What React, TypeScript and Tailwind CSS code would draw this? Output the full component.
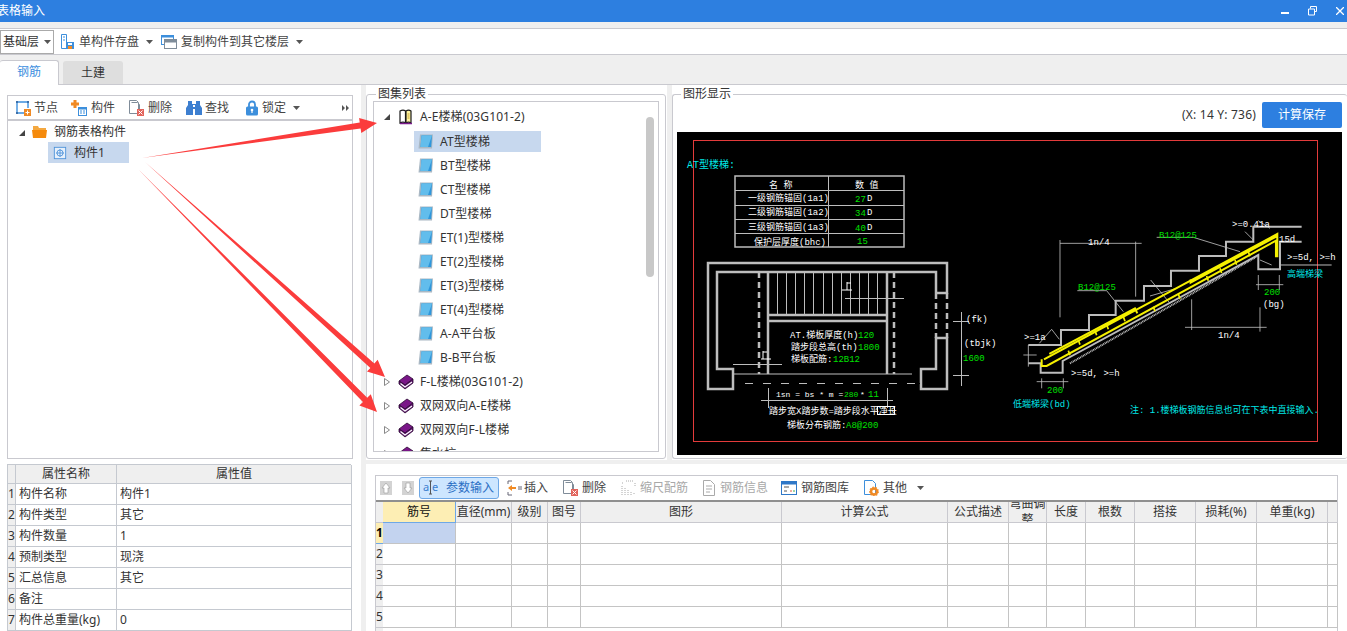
import type { ReactNode } from "react";

const cadFont = "'Liberation Mono','Noto Sans CJK SC',monospace";

function Caret({ className = "" }: { className?: string }) {
  return (
    <svg width="7" height="4" viewBox="0 0 7 4" className={className}>
      <path d="M0 0h7L3.5 4z" fill="#555" />
    </svg>
  );
}

function Icon({ size = 16, children }: { size?: number; children: ReactNode }) {
  return (
    <svg width={size} height={size} viewBox="0 0 16 16" className="shrink-0">
      {children}
    </svg>
  );
}

const DiskIcon = () => (
  <Icon>
    <path d="M1.5.5h5v14h-5zM3 3h2M3 6h2" fill="#fff" stroke="#3d8fdc" />
    <rect x="6" y="8" width="8" height="7" fill="#3d8fdc" />
    <rect x="8" y="9" width="4" height="2" fill="#fff" />
    <rect x="8" y="12" width="4" height="3" fill="#f08a24" />
  </Icon>
);
const CopyIcon = () => (
  <Icon>
    <rect x="0.5" y="1.5" width="12" height="9" fill="#fff" stroke="#3d8fdc" />
    <rect x="0.5" y="1.5" width="12" height="2" fill="#3d8fdc" />
    <rect x="3.5" y="5.5" width="12" height="9" fill="#fff" stroke="#7f8c99" />
    <rect x="3.5" y="5.5" width="12" height="3" fill="#7f8c99" />
  </Icon>
);
const NodeIcon = () => (
  <Icon>
    <path d="M3 2h9M2 3v9M3 13h6M13 3v5" stroke="#3d8fdc" strokeWidth="1.4" fill="none" />
    <rect x="1" y="1" width="2" height="2" fill="#3d6fa8" />
    <rect x="12" y="1" width="2" height="2" fill="#3d6fa8" />
    <rect x="1" y="12" width="2" height="2" fill="#3d6fa8" />
    <rect x="9" y="9" width="7" height="7" fill="#f08a24" />
    <path d="M12.5 10.5v4M10.5 12.5h4" stroke="#fff" />
  </Icon>
);
const PartIcon = () => (
  <Icon>
    <path d="M2.5 0h3v2.5H8v3H5.5V8h-3V5.5H0v-3h2.5z" fill="#f08a24" />
    <rect x="7.5" y="7.5" width="8" height="8" fill="#fff" stroke="#3d8fdc" />
    <rect x="7.5" y="7.5" width="8" height="2" fill="#3d8fdc" />
    <path d="M9 11h2M12 11h2M9 13h2M12 13h2" stroke="#3d8fdc" />
  </Icon>
);
const DeleteIcon = () => (
  <Icon>
    <path d="M1.5.5h7l2 2v11h-9z" fill="#fff" stroke="#7f8c99" />
    <path d="M3.5 2.5h6l2 2v6" fill="none" stroke="#7f8c99" />
    <rect x="9" y="9" width="7" height="7" fill="#e2645c" />
    <path d="M10.5 10.5l4 4M14.5 10.5l-4 4" stroke="#fff" />
  </Icon>
);
const BinocularsIcon = () => (
  <Icon>
    <path d="M2 1h4v3h4V1h4v4l2 3v7H9V9H7v6H0V8l2-3z" fill="#3d7fd0" />
    <rect x="7" y="5" width="2" height="2" fill="#fff" />
  </Icon>
);
const LockIcon = () => (
  <Icon>
    <path d="M5 7V4.5a3 3 0 0 1 6 0V7" fill="none" stroke="#3d8fdc" strokeWidth="1.8" />
    <rect x="2" y="6.5" width="12" height="9" rx="1.5" fill="#3d8fdc" />
    <circle cx="8" cy="10" r="1.3" fill="#fff" />
    <rect x="7.4" y="10" width="1.2" height="3" fill="#fff" />
  </Icon>
);
const FolderIcon = () => (
  <Icon>
    <path d="M1 2h5l1 2h7v2H1z" fill="#f4a840" />
    <path d="M0 6h15l-1 8H1z" fill="#f58a0c" />
  </Icon>
);
const PartTreeIcon = () => (
  <Icon size={14}>
    <rect x="1.5" y="1.5" width="13" height="13" fill="#e6f0fb" stroke="#4a90d9" />
    <circle cx="8" cy="8" r="3.5" fill="none" stroke="#4a90d9" />
    <path d="M8 3.5v9M3.5 8h9" stroke="#4a90d9" />
  </Icon>
);
const OpenBookIcon = () => (
  <Icon>
    <path d="M2 2c2-1 4-1 5.500 0v12C6 13 4 13 2 14z" fill="#fff" stroke="#1a1a1a" strokeWidth="1.2" />
    <path d="M8 2c1.500-1 3.500-1 5 0v12c-1.500-1-3.500-1-5 0z" fill="#fdf3a0" stroke="#1a1a1a" strokeWidth="1.2" />
    <path d="M2 14.500h12" stroke="#7a1a8a" strokeWidth="1.500" />
    <path d="M9.500 5h2M9.500 7h2M9.500 9h2" stroke="#c8a030" />
  </Icon>
);
const PageIcon = () => (
  <Icon>
    <path d="M2 0.500h13l-1 14H0.500z" fill="#a9b8c4" />
    <path d="M3.500 1.500h10.500l-.8 11.500H2.500z" fill="#2f97dc" />
    <path d="M3.500 1.500h10.500l-4 11.500H2.500z" fill="#62bdec" />
  </Icon>
);
const ClosedBookIcon = () => (
  <Icon>
    <path d="M1 7l8-6 6 4-8 6z" fill="#7a1688" stroke="#2c0a33" strokeWidth=".8" />
    <path d="M1 7v3l6 5 8-6V5l-8 6z" fill="#5c0e6c" stroke="#2c0a33" strokeWidth=".8" />
    <path d="M2.500 9.500l4.500 3.500 7-5" fill="none" stroke="#fff" strokeWidth="1.200" />
  </Icon>
);
const ParamIcon = () => (
  <svg width="15" height="16" viewBox="0 0 15 16" className="shrink-0">
    <text x="0" y="11" fontSize="11" fill="#3a7fd0" fontFamily="'Noto Sans',sans-serif">a</text>
    <text x="9" y="11" fontSize="11" fill="#3a7fd0" fontFamily="'Noto Sans',sans-serif">e</text>
    <path d="M6 1h3M6 14h3M7.500 1v13" stroke="#555" fill="none" />
  </svg>
);
const InsertIcon = () => (
  <Icon>
    <path d="M1 1h4M1 1v3M1 12v3h4M11 7h4M11 9h4" stroke="#667" fill="none" />
    <path d="M1 8l4-3v2h4v2H5v2z" fill="#f08a24" />
  </Icon>
);
const ScaleIcon = () => (
  <Icon>
    <path d="M1 3h1M5 1h8M1 6v9M4 8v7M7 10v5M10 12v3M13 13v2M14 3v3" stroke="#aaa" fill="none" strokeDasharray="1 1" />
  </Icon>
);
const InfoIcon = () => (
  <Icon>
    <path d="M2.500.5h7l4 4v11h-11z" fill="#fff" stroke="#aaa" />
    <path d="M5 6h6M5 9h6M5 12h4" stroke="#aaa" />
  </Icon>
);
const LibraryIcon = () => (
  <Icon>
    <rect x="0.500" y="1.500" width="15" height="13" fill="#fff" stroke="#2f78c8" />
    <rect x="0.500" y="1.500" width="15" height="3" fill="#2f78c8" />
    <path d="M3 7h5M3 11h3" stroke="#555" />
    <path d="M9 11h2" stroke="#e0553f" />
    <path d="M12 11h2" stroke="#3db04a" />
  </Icon>
);
const OtherIcon = () => (
  <Icon>
    <path d="M1.500.5h8l3 3v11h-11z" fill="#fff" stroke="#3d8fdc" />
    <circle cx="11" cy="11.500" r="3" fill="none" stroke="#f08a24" strokeWidth="2.500" />
    <circle cx="11" cy="11.500" r="4.300" fill="none" stroke="#f08a24" strokeWidth="1.200" strokeDasharray="1.500 1.500" />
  </Icon>
);

function ToolButton({
  icon,
  label,
  gap,
  width,
  caret,
  muted,
}: {
  icon: ReactNode;
  label: string;
  gap: string;
  width: string;
  caret?: string;
  muted?: boolean;
}) {
  return (
    <div className={`flex items-center ${gap} ${width} ${muted ? "text-[#a8a8a8]" : "text-[#444]"}`}>
      {icon}
      <span className="whitespace-nowrap">{label}</span>
      {caret && <Caret className={caret} />}
    </div>
  );
}

function TreeItem({ label, selected }: { label: string; selected?: boolean }) {
  return (
    <div className={`flex h-[21px] w-[127px] items-center gap-[6px] pl-[4px] mb-[3px] ml-[40px] ${selected ? "bg-[#c7d8ee]" : ""}`}>
      <PageIcon />
      <span className="whitespace-nowrap tracking-[.1px]">{label}</span>
    </div>
  );
}

function BookRow({ label, open }: { label: string; open?: boolean }) {
  return (
    <div className="flex h-[24px] items-center pl-[9px]">
      <svg width="8" height="8" viewBox="0 0 8 8" className="mr-[7px] shrink-0">
        {open ? <path d="M7 1v6H1z" fill="#444" /> : <path d="M1.500.5l5 3.500-5 3.500z" fill="#fff" stroke="#888" />}
      </svg>
      {open ? <OpenBookIcon /> : <ClosedBookIcon />}
      <span className="ml-[6px] whitespace-nowrap tracking-[.1px]">{label}</span>
    </div>
  );
}

const gridColumns = [
  { title: "筋号", cell: "w-[73px]" },
  { title: "直径(mm)", cell: "w-[56px]" },
  { title: "级别", cell: "w-[36px]" },
  { title: "图号", cell: "w-[33px]" },
  { title: "图形", cell: "w-[201px]" },
  { title: "计算公式", cell: "w-[166px]" },
  { title: "公式描述", cell: "w-[61px]" },
  { title: "弯曲调整", cell: "w-[38px]" },
  { title: "长度", cell: "w-[39px]" },
  { title: "根数", cell: "w-[49px]" },
  { title: "搭接", cell: "w-[61px]" },
  { title: "损耗(%)", cell: "w-[61px]" },
  { title: "单重(kg)", cell: "w-[71px]" },
  { title: "", cell: "w-[10px]" },
];

const properties = [
  ["构件名称", "构件1"],
  ["构件类型", "其它"],
  ["构件数量", "1"],
  ["预制类型", "现浇"],
  ["汇总信息", "其它"],
  ["备注", ""],
  ["构件总重量(kg)", "0"],
];

function CadText({ x, y, fill = "#fff", size = 9, children }: { x: number; y: number; fill?: string; size?: number; children: ReactNode }) {
  return (
    <text x={x} y={y} fill={fill} fontSize={size} fontFamily={cadFont}>
      {children}
    </text>
  );
}

function StairDrawing() {
  const treads = [777, 786, 795, 804, 813, 823, 832, 841, 850, 859, 868, 877];
  const tableRows = [
    ["一级钢筋锚固(1a1)", "27", 201, 748],
    ["二级钢筋锚固(1a2)", "34", 215, 748],
    ["三级钢筋锚固(1a3)", "40", 230, 748],
  ] as const;
  return (
    <svg viewBox="677 132 665 323" width="665" height="323" className="block">
      <rect x="677" y="132" width="665" height="323" fill="#000" />
      <rect x="693.500" y="140.500" width="624" height="301" fill="none" stroke="#e33b3b" />
      <CadText x={687} y={168} fill="#00e8e8" size={10}>AT型楼梯:</CadText>

      <g stroke="#bdbdbd" fill="none">
        <rect x="735" y="176" width="169" height="71" strokeWidth="1.500" />
        <path d="M735 190.500h169M735 205.500h169M735 219.500h169M735 233.500h169M828.500 176v71" />
      </g>
      <CadText x={769} y={188}>名  称</CadText>
      <CadText x={855} y={188}>数  值</CadText>
      {tableRows.map(([name, value, y, x]) => (
        <g key={name}>
          <CadText x={x} y={y}>{name}</CadText>
          <CadText x={855} y={y + 1} fill="#00e000">{value}</CadText>
          <CadText x={867} y={y}>D</CadText>
        </g>
      ))}
      <CadText x={754} y={245}>保护层厚度(bhc)</CadText>
      <CadText x={857} y={244} fill="#00e000">15</CadText>

      <g stroke="#bdbdbd" fill="none" strokeWidth="2.500">
        <path d="M936 293v-21H717v97h16v20h-25V263h239v30h-11" />
        <path d="M947 338v51h-26v-20h15v-31z" />
        <path d="M768 272v102M887 272v102M768 315h119M768 321h119" />
        <path d="M759 272v102M894 272v102M936 293v45M947 293v45" strokeDasharray="6 4" />
      </g>
      <g stroke="#bdbdbd" fill="none">
        {treads.map((x) => (
          <path key={x} d={`M${x}.5 272v43`} />
        ))}
        <path d="M733 374h179M735 383.500h185" strokeWidth="1.200" />
        <path d="M735 383.500h185" stroke="#000" strokeDasharray="10 8" />
        <path d="M845 298.500h59M733 364.500h49M768.500 388v20M887.500 388v20M761 400.500h132M961.500 312v74M953 321.500h16M953 375.500h16" />
      </g>
      <path d="M842 290h10M847 282v8M847 283h4M761 359h10M763 351v8M763 352h4" stroke="#fff" fill="none" />

      <CadText x={790} y={338}>AT.梯板厚度(h)</CadText>
      <CadText x={858} y={338} fill="#00e000">120</CadText>
      <CadText x={791} y={350}>踏步段总高(th)</CadText>
      <CadText x={858} y={350} fill="#00e000">1800</CadText>
      <CadText x={791} y={362}>梯板配筋:</CadText>
      <CadText x={833} y={362} fill="#00e000">12B12</CadText>
      <CadText x={776} y={397} size={8}>1sn = bs * m =</CadText>
      <CadText x={844} y={397} size={8} fill="#00e000">280</CadText>
      <CadText x={860} y={397} size={8}>*</CadText>
      <CadText x={868} y={397} fill="#00e000">11</CadText>
      <CadText x={769} y={414}>踏步宽X踏步数=踏步段水平净长</CadText>
      <rect x="877.500" y="406.500" width="17" height="8" fill="none" stroke="#fff" />
      <CadText x={787} y={428}>梯板分布钢筋:</CadText>
      <CadText x={846} y={428} fill="#00e000">A8@200</CadText>
      <CadText x={966} y={322}>(fk)</CadText>
      <CadText x={964} y={346}>(tbjk)</CadText>
      <CadText x={963} y={361} fill="#00e000">1600</CadText>

      <g transform="translate(1000 200) scale(0.3333)" fill="none">
        <path
          d="M85 435H183V390H267V345H347V302H432V258H513V212H597V168H678V125H760V80H905M85 490H122V518H188V483L775 165V208H840V125H905"
          stroke="#bdbdbd"
          strokeWidth="6"
        />
        <path d="M840 195H995" stroke="#bdbdbd" strokeWidth="3" />
        <path
          d="M180 130H425M180 120V352M407 125V290M555 382H800M575 298V390M780 322V395M110 545H205M125 535V565M190 535V565M768 254H850M775 225V270M838 225V270M470 112H580L720 155M232 272H320L370 335M70 465H110M85 435V500"
          stroke="#bdbdbd"
          strokeWidth="2.500"
        />
        <path d="M450 288L530 265M452 240L510 310M118 430L155 388L178 418M735 95L760 120M775 62L810 85M780 180L815 195" stroke="#bdbdbd" strokeWidth="2.500" />
        <path
          d="M125 478V498H140L828 122V172M132 478L832 102V172M148 462L405 325L412 340M572 238V248L832 108"
          stroke="#f5f000"
          strokeWidth="6"
        />
        <path d="M235 420l5 14M285 392l5 14M320 374l5 14M370 350l5 14M205 452l5 14M460 320l5 14M535 282l5 14M620 228l5 14M660 205l5 14M705 180l5 14M745 155l5 14" stroke="#f5f000" strokeWidth="5" />
        <path d="M210 490L770 170" stroke="#bdbdbd" strokeWidth="6" strokeDasharray="3 2" />
      </g>
      <CadText x={1159} y={238} fill="#00e000" size={9}>B12@125</CadText>
      <CadText x={1078} y={290} fill="#00e000" size={9}>B12@125</CadText>
      <CadText x={1088} y={245}>1n/4</CadText>
      <CadText x={1218} y={338}>1n/4</CadText>
      <CadText x={1232} y={227}>{">=0.41a"}</CadText>
      <CadText x={1279} y={242}>15d</CadText>
      <CadText x={1287} y={260}>{">=5d, >=h"}</CadText>
      <CadText x={1287} y={277} fill="#00e8e8">高端梯梁</CadText>
      <CadText x={1264} y={295} fill="#00e000">200</CadText>
      <CadText x={1263} y={307}>(bg)</CadText>
      <CadText x={1024} y={340}>{">=1a"}</CadText>
      <CadText x={1071} y={376}>{">=5d, >=h"}</CadText>
      <CadText x={1047} y={393} fill="#00e000">200</CadText>
      <CadText x={1013} y={407} fill="#00e8e8">低端梯梁(bd)</CadText>
      <CadText x={1130} y={413} fill="#00e8e8">注: 1.楼梯板钢筋信息也可在下表中直接输入.</CadText>
    </svg>
  );
}

function arrowPoints(x1: number, y1: number, x2: number, y2: number, shaft: number, head: number, len: number) {
  const dx = x2 - x1;
  const dy = y2 - y1;
  const d = Math.hypot(dx, dy);
  const ux = dx / d;
  const uy = dy / d;
  const bx = x2 - ux * len;
  const by = y2 - uy * len;
  const nx = -uy;
  const ny = ux;
  return [
    [x1, y1],
    [bx + nx * shaft, by + ny * shaft],
    [bx + nx * head, by + ny * head],
    [x2, y2],
    [bx - nx * head, by - ny * head],
    [bx - nx * shaft, by - ny * shaft],
  ]
    .map((p) => p.join(","))
    .join(" ");
}

export default function App() {
  return (
    <div className="relative flex h-[631px] w-[1347px] flex-col overflow-hidden bg-white text-[12px] leading-[16px] text-[#333] [font-family:'Noto_Sans','Noto_Sans_CJK_SC',sans-serif]">
      <div className="flex h-[22px] items-center justify-between bg-[#2d7fe0] pr-[3px] text-white">
        <span className="ml-[-3px]">表格输入</span>
        <div className="flex items-center gap-[19px]">
          <div className="mt-[3px] h-[2px] w-[8px] bg-white" />
          <svg width="9" height="10" viewBox="0 0 9 10">
            <path d="M2.500 2.500v-2h6v5h-2M.5 3h6v6h-6z" fill="none" stroke="#fff" />
          </svg>
          <svg width="8" height="8" viewBox="0 0 8 8">
            <path d="M0 0l8 8M8 0L0 8" stroke="#fff" strokeWidth="1.300" />
          </svg>
        </div>
      </div>

      <div className="h-[6px] bg-[#efefef]" />

      <div className="flex h-[27px] items-center border-y border-[#c9c9cf]">
        <div className="flex h-[24px] w-[54px] items-center border border-[#aaa] pl-[2px]">
          <span>基础层</span>
          <Caret className="ml-[5px]" />
        </div>
        <div className="ml-[6px] flex items-center">
          <ToolButton icon={<DiskIcon />} label="单构件存盘" gap="gap-[3px]" width="w-[101px]" caret="ml-[4px]" />
          <ToolButton icon={<CopyIcon />} label="复制构件到其它楼层" gap="gap-[4px]" width="w-[150px]" caret="ml-[3px]" />
        </div>
      </div>

      <div className="flex h-[30px] items-end gap-[4px] border-b border-[#c9c9cf] bg-[#efefef]">
        <div className="flex h-[25px] w-[59px] items-center justify-center rounded-t-[3px] border-r border-t border-[#c9c9cf] bg-white text-[#3d8fe0] mb-[-1px] pb-[2px]">钢筋</div>
        <div className="flex h-[23px] w-[60px] items-center justify-center rounded-t-[3px] bg-[#dedede]">土建</div>
      </div>

      <div className="flex min-h-0 flex-1">
        <div className="flex w-[361px] shrink-0 flex-col pl-[7px] pt-[10px]">
          <div className="flex h-[364px] w-[346px] flex-col border border-[#c9c9cf]">
            <div className="relative flex h-[25px] items-center border-b-2 border-[#c9c9cf] pl-[7px]">
              <ToolButton icon={<NodeIcon />} label="节点" gap="gap-[3px]" width="w-[56px]" />
              <ToolButton icon={<PartIcon />} label="构件" gap="gap-[4px]" width="w-[57px]" />
              <ToolButton icon={<DeleteIcon />} label="删除" gap="gap-[4px]" width="w-[58px]" />
              <ToolButton icon={<BinocularsIcon />} label="查找" gap="gap-[3px]" width="w-[58px]" />
              <ToolButton icon={<LockIcon />} label="锁定" gap="gap-[2px]" width="w-[80px]" caret="ml-[5px]" />
              <svg width="8" height="6" viewBox="0 0 8 6" className="absolute right-[2px] top-[9px]">
                <path d="M0 0l3 3-3 3zM4 0l3 3-3 3z" fill="#555" />
              </svg>
            </div>
            <div className="flex h-[21px] items-center pl-[10px] pt-[1px]">
              <svg width="8" height="8" viewBox="0 0 8 8" className="mr-[6px] mt-[1px]">
                <path d="M7 1v6H1z" fill="#444" />
              </svg>
              <FolderIcon />
              <span className="ml-[6px]">钢筋表格构件</span>
            </div>
            <div className="ml-[40px] flex h-[21px] w-[81px] items-center gap-[7px] bg-[#c7d8ee] pl-[5px]">
              <PartTreeIcon />
              <span>构件1</span>
            </div>
          </div>

          <div className="mt-[5px] grid w-[344px] grid-cols-[8px_101px_235px] border-l border-t border-[#c5c9d0]">
            <div className="h-[19px] border-b border-r border-[#c5c9d0] bg-[#efefef]" />
            <div className="flex h-[19px] items-center justify-center border-b border-r border-[#c5c9d0] bg-[#efefef]">属性名称</div>
            <div className="flex h-[19px] items-center justify-center border-b border-r border-[#c5c9d0] bg-[#efefef]">属性值</div>
            {properties.map(([name, value], i) => (
              <div key={name} className="contents">
                <div className="flex h-[21px] items-center border-b border-r border-[#c5c9d0] bg-[#efefef]">{i + 1}</div>
                <div className="flex h-[21px] items-center whitespace-nowrap border-b border-r border-[#c5c9d0] pl-[3px]">{name}</div>
                <div className="flex h-[21px] items-center border-b border-r border-[#c5c9d0] pl-[3px]">{value}</div>
              </div>
            ))}
          </div>
        </div>

        <div className="w-[5px] shrink-0 bg-[#efefef]" />

        <div className="flex min-w-0 flex-1 flex-col">
          <div className="flex h-[375px] shrink-0">
            <fieldset className="mt-[2px] h-[372px] w-[300px] rounded-[3px] border border-[#c9c9cf] px-[6px]">
              <legend className="ml-[3px] px-[2px] leading-[14px]">图集列表</legend>
              <div className="relative h-[351px] overflow-hidden border border-[#c9c9cf]">
                <div className="pt-[3px]">
                  <BookRow label="A-E楼梯(03G101-2)" open />
                  <div className="pt-[2px]">
                    {["AT型楼梯", "BT型楼梯", "CT型楼梯", "DT型楼梯", "ET(1)型楼梯", "ET(2)型楼梯", "ET(3)型楼梯", "ET(4)型楼梯", "A-A平台板", "B-B平台板"].map((label, i) => (
                      <TreeItem key={label} label={label} selected={i === 0} />
                    ))}
                  </div>
                  <div className="mt-[-1px]">
                    <BookRow label="F-L楼梯(03G101-2)" />
                    <BookRow label="双网双向A-E楼梯" />
                    <BookRow label="双网双向F-L楼梯" />
                    <BookRow label="集水坑" />
                  </div>
                </div>
                <div className="absolute right-[4px] top-[15px] h-[160px] w-[8px] rounded-[4px] bg-[#c8c8c8]" />
              </div>
            </fieldset>
            <div className="ml-[1px] w-[5px] shrink-0 bg-[#efefef]" />
            <fieldset className="mt-[2px] h-[372px] min-w-0 flex-1 rounded-[3px] border border-r-0 border-[#c9c9cf] pl-[4px]">
              <legend className="ml-[4px] px-[2px] leading-[14px]">图形显示</legend>
              <div className="flex h-[27px] items-center justify-end gap-[6px] pr-[5px]">
                <span className="mt-[1px] tracking-[.2px]">(X: 14 Y: 736)</span>
                <div className="flex h-[26px] w-[80px] items-center justify-center rounded-[2px] bg-[#2d7fe0] text-white">计算保存</div>
              </div>
              <div className="mt-[4px]">
                <StairDrawing />
              </div>
            </fieldset>
          </div>

          <div className="h-[4px] shrink-0 bg-[#efefef]" />

          <div className="flex-1 pl-[9px] pt-[11px]">
            <div className="w-[963px] border-l border-r border-t border-[#c9c9cf]">
              <div className="flex h-[26px] items-center border-b-2 border-[#8f8f8f] pl-[4px]">
                <svg width="12" height="14" viewBox="0 0 12 14" className="shrink-0">
                  <rect width="12" height="14" fill="#d3d3d3" />
                  <path d="M6 2l4 5H8v5H4V7H2z" fill="#fff" stroke="#999" strokeWidth=".6" />
                </svg>
                <svg width="12" height="14" viewBox="0 0 12 14" className="ml-[10px] shrink-0">
                  <rect width="12" height="14" fill="#d3d3d3" />
                  <path d="M6 12l4-5H8V2H4v5H2z" fill="#fff" stroke="#999" strokeWidth=".6" />
                </svg>
                <div className="ml-[5px] flex h-[22px] w-[80px] items-center gap-[8px] rounded-[3px] border border-[#6ea8e6] bg-[#cde6ff] pl-[3px] text-[#2a6fc4]">
                  <ParamIcon />
                  <span>参数输入</span>
                </div>
                <div className="ml-[8px] flex items-center">
                  <ToolButton icon={<InsertIcon />} label="插入" gap="gap-[1px]" width="w-[55px]" />
                  <ToolButton icon={<DeleteIcon />} label="删除" gap="gap-[4px]" width="w-[59px]" />
                  <ToolButton icon={<ScaleIcon />} label="缩尺配筋" gap="gap-[3px]" width="w-[80px]" muted />
                  <ToolButton icon={<InfoIcon />} label="钢筋信息" gap="gap-[3px]" width="w-[80px]" muted />
                  <ToolButton icon={<LibraryIcon />} label="钢筋图库" gap="gap-[4px]" width="w-[82px]" />
                  <ToolButton icon={<OtherIcon />} label="其他" gap="gap-[4px]" width="w-[70px]" caret="ml-[6px]" />
                </div>
              </div>

              <div className="flex h-[21px]">
                <div className="w-[7px] shrink-0 border-b border-[#c9c9cf] bg-[#efefef]" />
                {gridColumns.map((col, i) => (
                  <div
                    key={col.title + i}
                    className={`flex shrink-0 items-center justify-center overflow-hidden border-b border-r text-center leading-[16px] ${col.cell} ${i === 0 ? "border-b-[#6ea8e6] border-r-[#6ea8e6] bg-[#fdeeb4] text-[#111]" : "border-[#c9c9cf] bg-[#efefef]"}`}
                  >
                    {col.title}
                  </div>
                ))}
              </div>
              {[1, 2, 3, 4, 5].map((row) => (
                <div key={row} className="flex h-[21px]">
                  <div className={`w-[7px] shrink-0 overflow-visible border-b text-[12px] leading-[20px] ${row === 1 ? "border-[#6ea8e6] bg-[#fdeeb4] font-bold text-black" : "border-[#c9c9cf] bg-[#efefef]"}`}>
                    {row}
                  </div>
                  {gridColumns.map((col, i) => (
                    <div
                      key={col.title + i}
                      className={`shrink-0 border-b border-r border-[#c4c4c4] ${col.cell} ${row === 1 && i === 0 ? "bg-[#c3d3ef]" : ""}`}
                    />
                  ))}
                </div>
              ))}
              <div className="h-[8px] w-[7px] bg-[#efefef]" />
            </div>
          </div>
        </div>
      </div>

      <svg width="1347" height="631" viewBox="0 0 1347 631" className="pointer-events-none absolute left-0 top-0">
        <polygon points={arrowPoints(142, 158, 377, 123, 3, 7.500, 17)} fill="#fb3c3c" />
        <polygon points={arrowPoints(145, 162, 385, 377, 3, 8, 17)} fill="#fb3c3c" />
        <polygon points={arrowPoints(139, 170, 377, 412, 3, 8, 17)} fill="#fb3c3c" />
      </svg>
    </div>
  );
}
